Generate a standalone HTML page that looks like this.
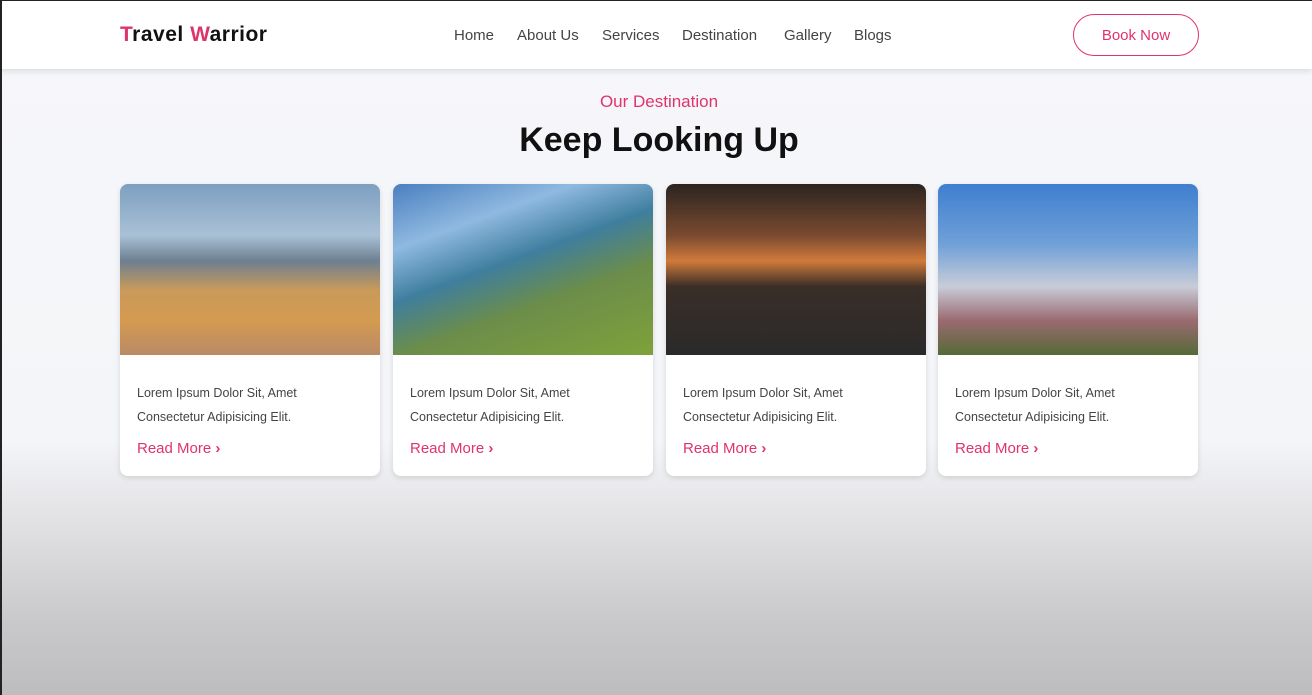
<!DOCTYPE html>
<html><head><style>
*{margin:0;padding:0;box-sizing:border-box}
body{width:1312px;height:695px;overflow:hidden;font-family:"Liberation Sans",sans-serif;background:linear-gradient(#f6f7fa 0px,#f4f5f8 440px,#e2e2e5 520px,#c9c9cc 620px,#bdbdc0 695px);position:relative}
.bl{position:absolute;left:0;top:0;width:2px;height:695px;background:#222;z-index:5}
.bt{position:absolute;left:0;top:0;width:1312px;height:1px;background:#222;z-index:5}
.nav{position:absolute;left:0;top:0;width:1312px;height:69px;background:#fff;box-shadow:0 2px 6px rgba(0,0,0,.12)}
.logo{position:absolute;left:120px;top:23px;font-size:21px;font-weight:bold;color:#111;letter-spacing:.5px}
.logo span{color:#e0336a}
.links a{position:absolute;top:27px;font-size:15px;color:#444}
.btn{position:absolute;left:1073px;top:14px;width:126px;height:42px;border:1.5px solid #e0336a;border-radius:21px;color:#e0336a;font-size:15px;text-align:center;line-height:41px}
.sub{position:absolute;top:92px;width:1318px;text-align:center;color:#e0336a;font-size:17px}
h1{position:absolute;top:121px;width:1318px;text-align:center;font-size:34px;color:#111}
.card{position:absolute;top:184px;width:260px;height:292px;background:#fff;border-radius:8px;overflow:hidden;box-shadow:0 2px 6px rgba(0,0,0,.12)}
.img{height:171px}
.t{position:absolute;left:17px;top:197px;font-size:12.5px;color:#444;line-height:24px}
.r{position:absolute;left:17px;top:256px;font-size:15px;color:#e0336a}
</style></head><body>
<div class="bl"></div><div class="bt"></div>
<div class="nav"><div class="logo"><span>T</span>ravel <span>W</span>arrior</div>
<div class="links"><a style="left:454px">Home</a><a style="left:517px">About Us</a><a style="left:602px">Services</a><a style="left:682px">Destination</a><a style="left:784px">Gallery</a><a style="left:854px">Blogs</a></div>
<div class="btn">Book Now</div></div>
<div class="sub">Our Destination</div>
<h1>Keep Looking Up</h1>
<div class="card" style="left:120px"><div class="img" style="background:linear-gradient(#7d9fc0 0%,#a9c1d6 30%,#6d7f90 45%,#c99a5a 62%,#d49a50 80%,#b98a66 100%)"></div><div class="t">Lorem Ipsum Dolor Sit, Amet<br>Consectetur Adipisicing Elit.</div><div class="r">Read More <b>›</b></div></div>
<div class="card" style="left:393px"><div class="img" style="background:linear-gradient(160deg,#4a7fc0 0%,#8fb9e0 25%,#3f7e9e 45%,#6b8d4a 65%,#7ea23a 100%)"></div><div class="t">Lorem Ipsum Dolor Sit, Amet<br>Consectetur Adipisicing Elit.</div><div class="r">Read More <b>›</b></div></div>
<div class="card" style="left:666px"><div class="img" style="background:linear-gradient(#2b2420 0%,#7a4a30 30%,#d07a3a 45%,#3a2e28 60%,#2a2a2a 100%)"></div><div class="t">Lorem Ipsum Dolor Sit, Amet<br>Consectetur Adipisicing Elit.</div><div class="r">Read More <b>›</b></div></div>
<div class="card" style="left:938px"><div class="img" style="background:linear-gradient(#3f7fcf 0%,#6fa0d8 35%,#c8ccd8 60%,#9a6a70 80%,#556a38 100%)"></div><div class="t">Lorem Ipsum Dolor Sit, Amet<br>Consectetur Adipisicing Elit.</div><div class="r">Read More <b>›</b></div></div>
</body></html>
